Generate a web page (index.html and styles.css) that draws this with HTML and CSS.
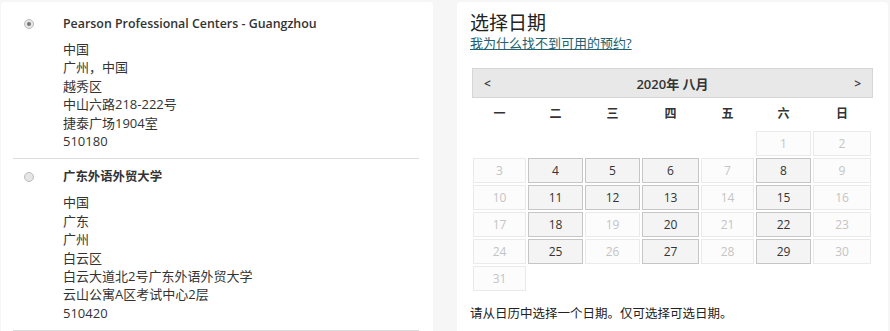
FILE: index.html
```html
<!DOCTYPE html>
<html>

<head>
  <meta charset="utf-8">
  <title>选择考点和日期</title>
  <link rel="stylesheet" href="styles.css">
</head>

<body>
  <div class="page">
    <div class="card sites">
      <div class="site">
        <span class="radio checked"></span>
        <div class="site-info">
          <div class="site-name">Pearson Professional Centers - Guangzhou</div>
          <div class="address">
            <div>中国</div>
            <div>广州，中国</div>
            <div>越秀区</div>
            <div>中山六路218-222号</div>
            <div>捷泰广场1904室</div>
            <div>510180</div>
          </div>
        </div>
      </div>
      <div class="site">
        <span class="radio"></span>
        <div class="site-info">
          <div class="site-name">广东外语外贸大学</div>
          <div class="address">
            <div>中国</div>
            <div>广东</div>
            <div>广州</div>
            <div>白云区</div>
            <div>白云大道北2号广东外语外贸大学</div>
            <div>云山公寓A区考试中心2层</div>
            <div>510420</div>
          </div>
        </div>
      </div>
    </div>

    <div class="card dates">
      <h2>选择日期</h2>
      <a href="#" class="help-link">我为什么找不到可用的预约?</a>

      <div class="calendar">
        <div class="cal-header">
          <span class="nav">&lt;</span>
          <span class="month">2020年 八月</span>
          <span class="nav">&gt;</span>
        </div>
        <div class="cal-grid weekdays">
          <div>一</div><div>二</div><div>三</div><div>四</div><div>五</div><div>六</div><div>日</div>
        </div>
        <div class="cal-grid days">
          <div class="empty"></div><div class="empty"></div><div class="empty"></div><div class="empty"></div><div class="empty"></div>
          <div class="day">1</div><div class="day">2</div>
          <div class="day">3</div><div class="day open">4</div><div class="day open">5</div><div class="day open">6</div><div class="day">7</div><div class="day open">8</div><div class="day">9</div>
          <div class="day">10</div><div class="day open">11</div><div class="day open">12</div><div class="day open">13</div><div class="day">14</div><div class="day open">15</div><div class="day">16</div>
          <div class="day">17</div><div class="day open">18</div><div class="day">19</div><div class="day open">20</div><div class="day">21</div><div class="day open">22</div><div class="day">23</div>
          <div class="day">24</div><div class="day open">25</div><div class="day">26</div><div class="day open">27</div><div class="day">28</div><div class="day open">29</div><div class="day">30</div>
          <div class="day">31</div>
        </div>
      </div>

      <p class="hint">请从日历中选择一个日期。仅可选择可选日期。</p>
    </div>
  </div>
</body>

</html>
```

FILE: styles.css
```css
body {
  margin: 0;
  background-color: #f6f6f6;
  font-family: 'Open Sans', 'Noto Sans CJK SC', sans-serif;
  color: #333;
  font-size: 13px;
}

.page {
  display: flex;
  gap: 24px;
  padding: 2px 2px 0 1px;
  height: 329px;
  overflow: hidden;
}

.card {
  background-color: #fff;
  border-radius: 4px 4px 0 0;
}

.sites {
  width: 432px;
  padding-top: 4px;
}

.dates {
  width: 418px;
  padding: 10px 0 0 13px;
}

/* site list */
.site {
  display: flex;
  margin: 0 14px 0 12px;
  padding: 9px 0 8px 11px;
  border-bottom: 1px solid #dcdcdc;
}

.radio {
  flex: none;
  width: 8px;
  height: 8px;
  margin: 4px 29px 0 0;
  border: 1px solid #bbb;
  border-radius: 50%;
  background-color: #e6e6e6;
  position: relative;
}

.radio.checked::after {
  content: '';
  position: absolute;
  left: 2px;
  top: 2px;
  width: 4px;
  height: 4px;
  border-radius: 50%;
  background-color: #777;
}

.site-name {
  font-size: 12.4px;
  font-weight: 600;
  line-height: 18px;
  margin-bottom: 7px;
}

.address {
  line-height: 18.4px;
}

/* date picker */
h2 {
  margin: 0;
  font-size: 19px;
  font-weight: normal;
  line-height: 22px;
  color: #222;
}

.help-link {
  display: inline-block;
  line-height: 18px;
  color: #24616e;
}

.calendar {
  width: 401px;
  margin: 16px 0 0 2px;
}

.cal-header {
  display: flex;
  justify-content: space-between;
  align-items: center;
  height: 28px;
  padding: 0 11px;
  background-color: #e8e8e8;
  border: 1px solid #d6d6d6;
  font-weight: 600;
}

.cal-header .nav {
  font-size: 12px;
}

.cal-grid {
  display: grid;
  grid-template-columns: 53px 55px 55px 57px 53px 55px 58px;
  column-gap: 2px;
  row-gap: 2px;
  margin-left: 1px;
}

.weekdays {
  height: 30px;
  align-items: center;
  text-align: center;
  font-size: 12px;
  font-weight: 600;
}

.days {
  margin-top: 3px;
}

.day {
  height: 23px;
  line-height: 23px;
  text-align: center;
  font-size: 12px;
  color: #c4c4c4;
  background-color: #fcfcfc;
  border: 1px solid #eaeaea;
}

.day.open {
  color: #333;
  background-color: #f4f4f4;
  border-color: #c6c6c6;
}

.hint {
  margin: 14px 0 0;
  font-size: 12.5px;
  line-height: 18px;
  color: #222;
}
```
